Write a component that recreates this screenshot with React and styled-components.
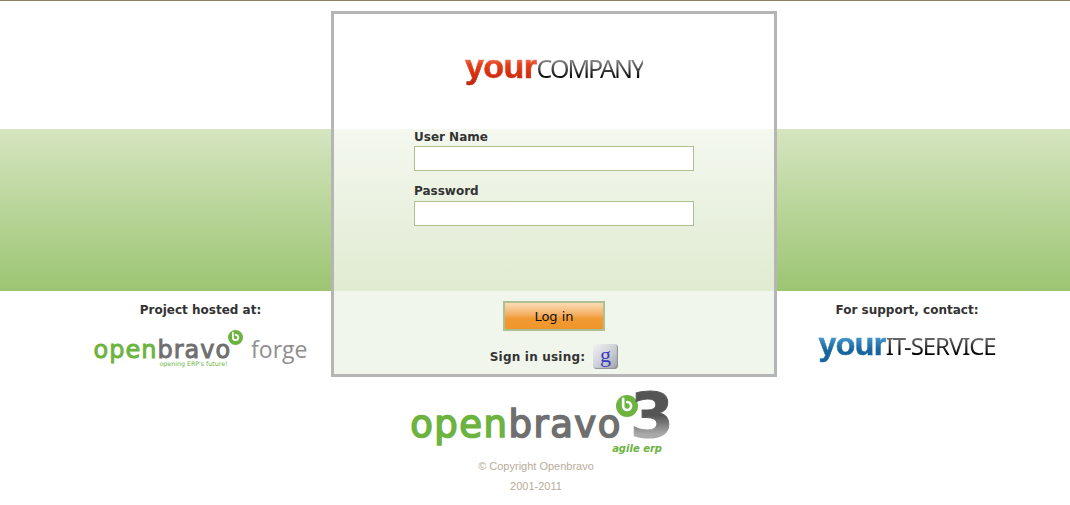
import React from "react";
import styled, { createGlobalStyle } from "styled-components";

const Global = createGlobalStyle`
  html, body { margin: 0; padding: 0; background: #fff; }
  body { font-family: "DejaVu Sans", sans-serif; color: #333; overflow: hidden; }
`;

const Page = styled.div`
  width: 1070px;
  height: 505px;
  border-top: 1px solid #8b8163;
  box-sizing: border-box;
`;

const Stage = styled.div`
  display: grid;
  grid-template-columns: 331px 446px 1fr;
  height: 376px;
  padding-top: 10px;
  box-sizing: border-box;
  background: linear-gradient(#d5e5c0, #9cc572) 0 128px / 100% 162px no-repeat;
`;

const Side = styled.aside`
  padding: 291px ${(p) => p.$right}px 0 ${(p) => p.$left}px;
  display: flex;
  flex-direction: column;
  align-items: center;
`;

const SideTitle = styled.div`
  font-size: 12px;
  font-weight: 700;
  line-height: 16px;
  color: #333;
  margin-bottom: ${(p) => p.$gap}px;
`;

const Panel = styled.main`
  box-sizing: border-box;
  height: 366px;
  border: 3px solid #b5b5b5;
  padding: 0 80px;
  display: flex;
  flex-direction: column;
  background: linear-gradient(
    #fff 115px,
    #f4f8ef 115px,
    #e0ebd1 277px,
    #f1f6ec 277px
  );
`;

const CompanyLogo = styled.div`
  display: flex;
  justify-content: center;
  align-items: baseline;
  height: ${(p) => p.$height}px;
  margin: ${(p) => p.$margin};
  line-height: 40px;
`;

const GradientText = styled.span`
  background: linear-gradient(${(p) => p.$colors});
  -webkit-background-clip: text;
  background-clip: text;
  color: transparent;
`;

const HeavyWord = styled(GradientText)`
  font-family: "Liberation Sans", sans-serif;
  font-weight: 700;
  font-size: ${(p) => p.$size}px;
  letter-spacing: -0.5px;
  -webkit-text-stroke: 0.6px transparent;
`;

const LightWord = styled(GradientText)`
  font-family: "Noto Sans", sans-serif;
  font-weight: 400;
  font-size: ${(p) => p.$size}px;
  letter-spacing: ${(p) => p.$spacing}px;
`;

const Field = styled.label`
  display: block;
  margin-bottom: ${(p) => p.$gap}px;
`;

const FieldLabel = styled.span`
  display: block;
  font-size: 12px;
  font-weight: 700;
  line-height: 15px;
  margin-bottom: ${(p) => p.$gap}px;
  color: #333;
`;

const TextInput = styled.input`
  display: block;
  box-sizing: border-box;
  width: 280px;
  height: 25px;
  border: 1px solid #aebf91;
  background: #fff;
  padding: 0 4px;
  outline: none;
`;

const Actions = styled.div`
  display: flex;
  flex-direction: column;
  align-items: center;
  margin-top: 75px;
`;

const LoginButton = styled.button`
  box-sizing: border-box;
  width: 102px;
  height: 30px;
  border: 2px solid #aebf91;
  background: linear-gradient(#fbdcb6 0%, #f4ae62 45%, #f19a32 60%, #f0952b 100%);
  font-family: "DejaVu Sans", sans-serif;
  font-size: 13px;
  color: #111;
  padding: 0;
`;

const SignIn = styled.div`
  display: flex;
  align-items: center;
  gap: 8px;
  margin-top: 13px;
  font-size: 12px;
  font-weight: 700;
  color: #333;
  letter-spacing: 0.2px;
`;

const GoogleButton = styled.span`
  box-sizing: border-box;
  width: 25px;
  height: 25px;
  border-radius: 4px;
  display: flex;
  align-items: center;
  justify-content: center;
  background: linear-gradient(135deg, #f2f2f2, #c9cdd4 55%, #9fa3a8);
  box-shadow: inset -1px -1px 1px #8e9196;
  font-family: "Liberation Serif", serif;
  font-size: 22px;
  font-weight: 400;
  line-height: 20px;
  padding-bottom: 4px;
  color: #3b3bc0;
`;

const Wordmark = styled.div`
  position: relative;
  display: inline-flex;
  align-items: baseline;
  font-family: "DejaVu Sans", sans-serif;
  font-size: ${(p) => p.$size}px;
  line-height: ${(p) => p.$size}px;
  -webkit-text-stroke: ${(p) => p.$stroke}px currentColor;
  letter-spacing: ${(p) => p.$spacing}px;
`;

const Open = styled.span`
  color: #6cb33f;
`;
const Bravo = styled.span`
  color: #6f6f6f;
`;

const Swirl = styled.svg`
  position: absolute;
  right: ${(p) => p.$right}px;
  top: ${(p) => p.$top}px;
  width: ${(p) => p.$d}px;
  height: ${(p) => p.$d}px;
`;

const Tagline = styled.span`
  position: absolute;
  left: ${(p) => p.$left}px;
  bottom: ${(p) => p.$bottom}px;
  font-family: "DejaVu Sans", sans-serif;
  font-size: ${(p) => p.$size}px;
  line-height: 1;
  font-weight: ${(p) => (p.$italic ? 700 : 400)};
  font-style: ${(p) => (p.$italic ? "italic" : "normal")};
  letter-spacing: 0;
  color: #6cb33f;
  white-space: nowrap;
  -webkit-text-stroke: 0;
`;

const Row = styled.div`
  display: flex;
  align-items: baseline;
  gap: ${(p) => p.$gap}px;
`;

const Forge = styled.span`
  font-family: "Open Sans", sans-serif;
  font-size: 23px;
  color: #8f8f8f;
  line-height: 25px;
`;

const Footer = styled.footer`
  display: flex;
  flex-direction: column;
  align-items: center;
  padding: 29px 0 0 0;
  width: 1072px;
`;

const Three = styled(GradientText)`
  position: absolute;
  right: -52px;
  top: -22px;
  font-family: "DejaVu Sans", sans-serif;
  font-weight: 700;
  font-size: 63px;
  line-height: 63px;
  letter-spacing: 0;
  -webkit-text-stroke: 1px transparent;
`;

const FooterLogo = styled.div`
  position: relative;
  margin-left: -40px;
`;

const Copy = styled.div`
  font-family: "Liberation Sans", sans-serif;
  font-size: 11px;
  line-height: 20px;
  color: #b8ad9a;
`;

const CopyBlock = styled.div`
  margin-top: 13px;
  text-align: center;
`;

const SwirlMark = ({ d, right, top }) => (
  <Swirl $d={d} $right={right} $top={top} viewBox="0 0 20 20">
    <circle cx="10" cy="10" r="10" fill="#6cb33f" />
    <path d="M6.5 3.5V10a3.6 3.6 0 1 0 3.6-3.6" fill="none" stroke="#fff" strokeWidth="2.4" strokeLinecap="round" />
  </Swirl>
);

export default function App() {
  return (
    <Page>
      <Global />
      <Stage>
        <Side $left={70} $right={0}>
          <SideTitle $gap={19}>Project hosted at:</SideTitle>
          <Row $gap={20}>
            <Wordmark $size={24} $stroke={0.9} $spacing={1}>
              <Open>open</Open>
              <Bravo>bravo</Bravo>
              <SwirlMark d={15} right={-12} top={-8} />
              <Tagline $left={66} $bottom={-5} $size={6.3}>opening ERP's future!</Tagline>
            </Wordmark>
            <Forge>forge</Forge>
          </Row>
        </Side>
        <Panel>
          <CompanyLogo $height={72} $margin="32px 0 12px">
            <HeavyWord $size={34} $colors="#f8a38e 20%, #e5401c 45%, #d9300f 65%, #b92a12">your</HeavyWord>
            <LightWord $size={25} $spacing={-2} $colors="#9a9a9a 25%, #111 70%">COMPANY</LightWord>
          </CompanyLogo>
          <Field $gap={13}>
            <FieldLabel $gap={1}>User Name</FieldLabel>
            <TextInput type="text" />
          </Field>
          <Field $gap={0}>
            <FieldLabel $gap={2}>Password</FieldLabel>
            <TextInput type="password" />
          </Field>
          <Actions>
            <LoginButton type="button">Log in</LoginButton>
            <SignIn>
              Sign in using:
              <GoogleButton>g</GoogleButton>
            </SignIn>
          </Actions>
        </Panel>
        <Side $left={0} $right={33}>
          <SideTitle $gap={6}>For support, contact:</SideTitle>
          <CompanyLogo $height={40} $margin="0">
            <HeavyWord $size={32} $colors="#56a9da 20%, #17659f 65%">your</HeavyWord>
            <LightWord $size={24} $spacing={-1.1} $colors="#777 25%, #000 70%">IT-SERVICE</LightWord>
          </CompanyLogo>
        </Side>
      </Stage>
      <Footer>
        <FooterLogo>
          <Wordmark $size={37} $stroke={1.6} $spacing={1.5}>
            <Open>open</Open>
            <Bravo>bravo</Bravo>
            <SwirlMark d={22} right={-16} top={-11} />
            <Three $colors="#555, #555 50%, #aaa 80%">3</Three>
            <Tagline $left={202} $bottom={-11} $size={10} $italic>agile erp</Tagline>
          </Wordmark>
        </FooterLogo>
        <CopyBlock>
          <Copy>© Copyright Openbravo</Copy>
          <Copy>2001-2011</Copy>
        </CopyBlock>
      </Footer>
    </Page>
  );
}
